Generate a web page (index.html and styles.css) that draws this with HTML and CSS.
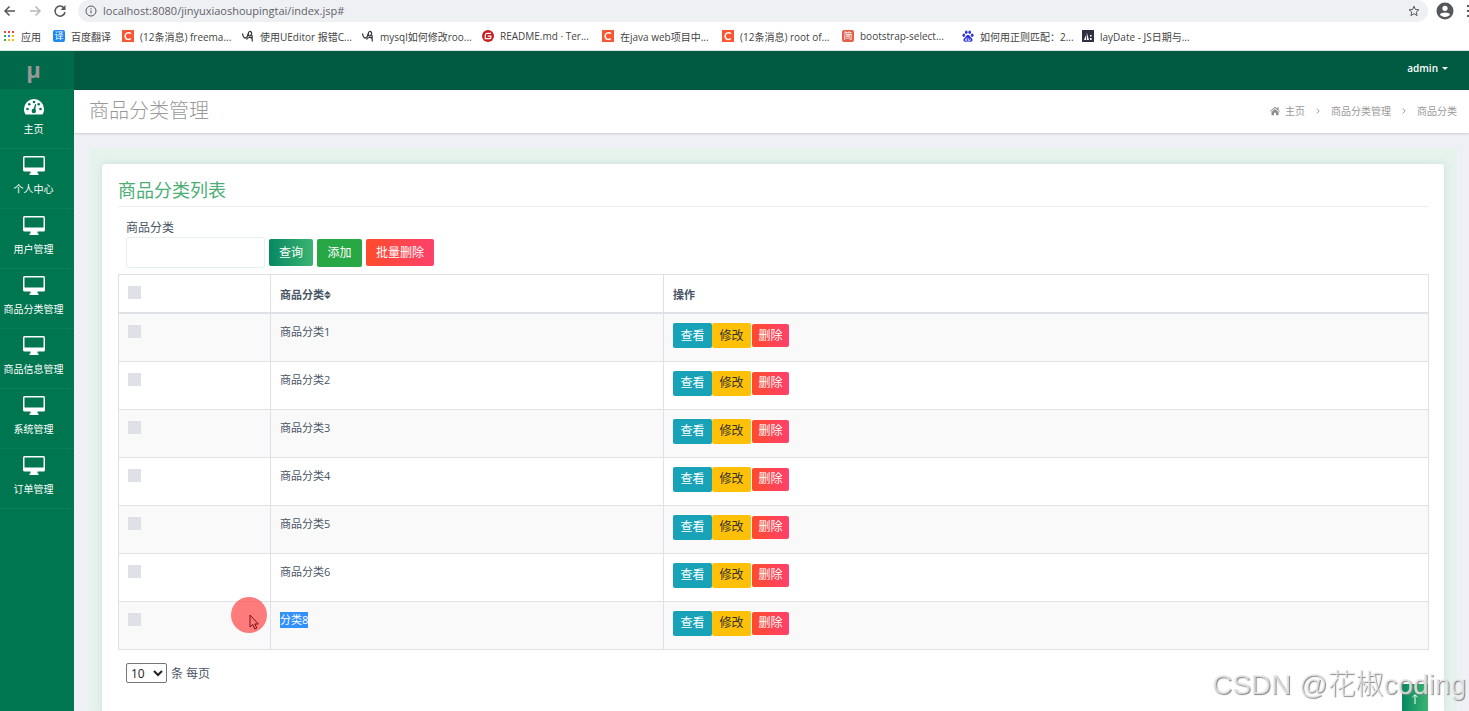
FILE: index.html
```
<!DOCTYPE html>
<html lang="zh-CN">
<head>
  <meta charset="UTF-8">
  <title>商品分类管理</title>
  <link rel="stylesheet" href="styles.css">
</head>
<body>
  <svg class="defs" width="0" height="0">
    <symbol id="monitor" viewBox="0 0 22 20">
      <path fill-rule="evenodd" d="M1.5 0h19A1.5 1.5 0 0 1 22 1.500V14a1.500 1.500 0 0 1-1.500 1.500H14.500V17.500H15.500V19H6.500V17.500H7.500V15.500H1.500A1.500 1.500 0 0 1 0 14V1.500A1.500 1.500 0 0 1 1.500 0ZM1.500 1.500V11.500H20.500V1.500Z"/>
    </symbol>
    <symbol id="gauge" viewBox="0 0 22 20">
      <path d="M11 3A10 10 0 0 0 1 13c0 2 .5 4 1.500 5.500h17C20.500 17 21 15 21 13A10 10 0 0 0 11 3Z"/>
      <g class="holes"><circle cx="4.500" cy="13" r="1.300"/><circle cx="6.300" cy="8.300" r="1.300"/><circle cx="11" cy="6" r="1.300"/><circle cx="15.700" cy="8.300" r="1.300"/><circle cx="17.500" cy="13" r="1.300"/><circle cx="10.800" cy="15" r="2.200"/><path d="M10 14.500 12.200 8l1 .3L12 15Z"/></g>
    </symbol>
    <symbol id="csdn" viewBox="0 0 12 12">
      <path fill="#fc5531" d="M0 0h12v12H0z"/>
      <path d="M9 3.700C7.500 2.300 3.300 2.100 3.200 6.200c0 3.700 3.800 3.900 5.500 2.500" fill="none" stroke="#fff" stroke-width="1.500"/>
    </symbol>
    <symbol id="scribble" viewBox="0 0 12 12">
      <path d="M.5 3.500C1 7 2.500 9 4.500 7.500S5.500 2 7.500 1.500 10.500 4 8.500 5.500 5.500 4 7 3.500M10 5l.3 6.500M4.500 9.500C6 7 8.500 7 10 8.500" fill="none" stroke="#333" stroke-width="1.200"/>
    </symbol>
  </svg>

  <div class="toolbar">
    <button class="tool" aria-label="后退"><svg width="14" height="14" viewBox="0 0 14 14"><path d="M12 7H2.500M6.500 2.500 2 7l4.500 4.500"/></svg></button>
    <button class="tool off" aria-label="前进"><svg width="14" height="14" viewBox="0 0 14 14"><path d="M2 7h9.500M7.500 2.500 12 7l-4.500 4.500"/></svg></button>
    <button class="tool" aria-label="刷新"><svg width="14" height="14" viewBox="0 0 14 14"><path d="M11 4A5 5 0 1 0 12 8"/><path class="solid" d="M12.500 1v5H7.500Z"/></svg></button>
    <div class="address">
      <svg width="12" height="12" viewBox="0 0 12 12"><circle cx="6" cy="6" r="5"/><path d="M6 5.300v3.200M6 3.200v1.200"/></svg>
      <label class="url"><input type="text" aria-label="地址" value="localhost:8080/jinyuxiaoshoupingtai/index.jsp#"></label>
      <svg width="12" height="12" viewBox="0 0 12 12"><path d="M6 1.200 7.400 4.500l3.500.3-2.700 2.300.9 3.500L6 8.700l-3.100 1.900.9-3.500L1.100 4.800l3.500-.3Z"/></svg>
    </div>
    <button class="tool profile" aria-label="用户"><svg width="18" height="18" viewBox="0 0 18 18"><circle class="solid" cx="9" cy="9" r="8.500"/><circle class="white" cx="9" cy="6.300" r="2.600"/><path class="white" d="M3.800 12.500C5 9.800 13 9.800 14.200 12.500 12 15.800 6 15.800 3.800 12.500Z"/></svg></button>
    <button class="tool more" aria-label="更多"><svg width="2" height="14" viewBox="0 0 2 14"><path class="solid" d="M0 1h2v2H0zM0 6h2v2H0zM0 11h2v2H0z"/></svg></button>
  </div>

  <nav class="bookmarks">
    <a class="apps" href="#"><svg width="12" height="12" viewBox="0 0 12 12"><path fill="#ea4335" d="M1 1h2v2H1zM5 1h2v2H5zM9 1h2v2H9z"/><path fill="#34a853" d="M1 5h2v2H1zM1 9h2v2H1z"/><path fill="#4285f4" d="M5 5h2v2H5z"/><path fill="#fbbc05" d="M9 5h2v2H9zM5 9h2v2H5zM9 9h2v2H9z"/></svg>应用</a>
    <a class="fanyi" href="#"><span class="badge blue">译</span>百度翻译</a>
    <a href="#"><svg width="12" height="12"><use href="#csdn"/></svg>(12条消息) freema...</a>
    <a href="#"><svg width="12" height="12"><use href="#scribble"/></svg>使用UEditor 报错C...</a>
    <a href="#"><svg width="12" height="12"><use href="#scribble"/></svg>mysql如何修改roo...</a>
    <a href="#"><svg width="12" height="12" viewBox="0 0 12 12"><circle cx="6" cy="6" r="6" fill="#c71d23"/><path d="M9 3.300H5.500C4 3.300 3.300 4 3.300 5.500v3.200h4.500q1 0 1-1V6.200H5.700" fill="none" stroke="#fff" stroke-width="1.300"/></svg>README.md · Ter...</a>
    <a href="#"><svg width="12" height="12"><use href="#csdn"/></svg>在java web项目中...</a>
    <a href="#"><svg width="12" height="12"><use href="#csdn"/></svg>(12条消息) root of...</a>
    <a href="#"><span class="badge red">简</span>bootstrap-select...</a>
    <a href="#"><svg width="12" height="12" viewBox="0 0 12 12"><g fill="#2932e1"><ellipse cx="1.800" cy="5.300" rx="1.300" ry="1.700"/><ellipse cx="4.300" cy="2.300" rx="1.300" ry="1.800"/><ellipse cx="7.700" cy="2.300" rx="1.300" ry="1.800"/><ellipse cx="10.200" cy="5.300" rx="1.300" ry="1.700"/><path d="M6 5C8 5 8 7 9.500 8s1.500 4-1 3.700q-2.500-.4-5 0C1 12 1 9 2.500 8S4 5 6 5Z"/></g><path d="M4.800 7.500v3H3.500V9h1M6.500 8.500v2h1.700v-2" fill="none" stroke="#fff" stroke-width=".7"/></svg>如何用正则匹配：2...</a>
    <a href="#"><svg width="12" height="12" viewBox="0 0 12 12"><path fill="#2f3040" d="M0 0h12v12H0z"/><path fill="#fff" d="M2 10 4 5v5zM4.800 10V2.500L7 10zM8 5h1.600v1.500H8zM8 8h1.600v2H8z"/></svg>layDate - JS日期与...</a>
  </nav>

  <div class="app">
    <aside class="sidebar">
      <a class="logo" href="#">µ</a>
      <a class="item" href="#"><svg width="22" height="20"><use href="#gauge"/></svg>主页</a>
      <a class="item" href="#"><svg width="22" height="20"><use href="#monitor"/></svg>个人中心</a>
      <a class="item" href="#"><svg width="22" height="20"><use href="#monitor"/></svg>用户管理</a>
      <a class="item" href="#"><svg width="22" height="20"><use href="#monitor"/></svg>商品分类管理</a>
      <a class="item" href="#"><svg width="22" height="20"><use href="#monitor"/></svg>商品信息管理</a>
      <a class="item" href="#"><svg width="22" height="20"><use href="#monitor"/></svg>系统管理</a>
      <a class="item" href="#"><svg width="22" height="20"><use href="#monitor"/></svg>订单管理</a>
    </aside>

    <div class="main">
      <header class="topbar"><button class="user">admin <span class="caret"></span></button></header>

      <div class="page-head">
        <h1>商品分类管理</h1>
        <nav class="crumbs">
          <a href="#"><svg width="10" height="10" viewBox="0 0 10 10"><path d="M5 .8 0 5.200l.6.6L5 2l4.400 3.800.6-.6L8.500 3.900V1.200H7.200v1.500ZM5 2.900 1.500 5.900v3.400H4V6.700h2v2.600h2.500V5.900Z"/></svg>主页</a>
          <svg class="sep" width="4" height="6" viewBox="0 0 4 6"><path d="m.7.500 2.500 2.500L.7 5.500"/></svg>
          <a href="#">商品分类管理</a>
          <svg class="sep" width="4" height="6" viewBox="0 0 4 6"><path d="m.7.500 2.500 2.500L.7 5.500"/></svg>
          <a href="#">商品分类</a>
        </nav>
      </div>

      <div class="content">
        <div class="wrap">
          <div class="card">
            <h2>商品分类列表</h2>
            <form class="search">
              <label for="keyword">商品分类</label>
              <div class="search-row">
                <input type="text" id="keyword">
                <button type="button" class="btn query">查询</button>
                <button type="button" class="btn add">添加</button>
                <button type="button" class="btn danger">批量删除</button>
              </div>
            </form>

            <table>
              <thead>
                <tr>
                  <th class="col-check"><input type="checkbox" aria-label="全选"></th>
                  <th class="col-name">商品分类<svg width="7" height="8" viewBox="0 0 7 8"><path d="M3.500 0 7 3.400H0ZM0 4.600h7L3.500 8Z"/></svg></th>
                  <th>操作</th>
                </tr>
              </thead>
              <tbody>
                <tr><td><input type="checkbox" aria-label="选择"></td><td>商品分类1</td><td><div class="ops"><button class="btn view">查看</button><button class="btn edit">修改</button><button class="btn danger">删除</button></div></td></tr>
                <tr><td><input type="checkbox" aria-label="选择"></td><td>商品分类2</td><td><div class="ops"><button class="btn view">查看</button><button class="btn edit">修改</button><button class="btn danger">删除</button></div></td></tr>
                <tr><td><input type="checkbox" aria-label="选择"></td><td>商品分类3</td><td><div class="ops"><button class="btn view">查看</button><button class="btn edit">修改</button><button class="btn danger">删除</button></div></td></tr>
                <tr><td><input type="checkbox" aria-label="选择"></td><td>商品分类4</td><td><div class="ops"><button class="btn view">查看</button><button class="btn edit">修改</button><button class="btn danger">删除</button></div></td></tr>
                <tr><td><input type="checkbox" aria-label="选择"></td><td>商品分类5</td><td><div class="ops"><button class="btn view">查看</button><button class="btn edit">修改</button><button class="btn danger">删除</button></div></td></tr>
                <tr><td><input type="checkbox" aria-label="选择"></td><td>商品分类6</td><td><div class="ops"><button class="btn view">查看</button><button class="btn edit">修改</button><button class="btn danger">删除</button></div></td></tr>
                <tr><td><input type="checkbox" aria-label="选择"></td><td><span class="selected">分类8</span></td><td><div class="ops"><button class="btn view">查看</button><button class="btn edit">修改</button><button class="btn danger">删除</button></div></td></tr>
              </tbody>
            </table>

            <div class="pager">
              <select id="size"><option>10</option><option>20</option></select>
              <label for="size">条 每页</label>
            </div>
          </div>
        </div>
      </div>
    </div>
  </div>

  <a class="to-top" href="#" aria-label="返回顶部"><svg width="8" height="10" viewBox="0 0 8 10"><path d="M4 10V1M1.500 3 4 .8 6.500 3"/></svg></a>
  <div class="watermark">CSDN @花椒coding</div>
  <div class="pointer"><svg width="10" height="16" viewBox="0 0 10 16"><path d="M1 1v12l2.800-2.500L5.800 15l2-1-2-4H9.300Z"/></svg></div>
</body>
</html>
```
FILE: styles.css
```
* {
  box-sizing: border-box;
}

body {
  margin: 0;
  min-height: 100vh;
  display: flex;
  flex-direction: column;
  font-family: "Open Sans", "Noto Sans CJK SC", sans-serif;
  font-size: 12px;
  color: #495565;
  background: #eff0f5;
}

a {
  color: inherit;
  text-decoration: none;
}

button, input, select {
  font-family: inherit;
}

button {
  cursor: pointer;
}

.defs {
  position: absolute;
}

/* browser bar */
.toolbar {
  display: flex;
  align-items: center;
  height: 22px;
  padding-left: 3px;
  background: #fff;
  flex-shrink: 0;
}

.tool {
  display: flex;
  border: none;
  background: none;
  padding: 0;
  margin-right: 11px;
}

.toolbar svg {
  fill: none;
  stroke: #54585c;
  stroke-width: 1.5;
}

.toolbar .off svg {
  stroke: #b5b8bb;
}

.toolbar .solid {
  fill: #54585c;
  stroke: none;
}

.toolbar .white {
  fill: #fff;
  stroke: none;
}

.address {
  flex: 1;
  display: flex;
  align-items: center;
  gap: 6px;
  height: 22px;
  padding: 0 8px 0 7px;
  border-radius: 11px;
  background: #eff0f4;
}

.address svg {
  stroke-width: 1;
}

.url {
  flex: 1;
  display: flex;
}

.url input {
  width: 100%;
  border: none;
  padding: 0;
  background: none;
  font-size: 11px;
  line-height: 16px;
  color: #5f6368;
}

.tool.profile {
  margin: 0 13px 0 8px;
}

.tool.more {
  margin: 0;
}

.bookmarks {
  display: flex;
  align-items: center;
  height: 29px;
  padding-left: 3px;
  border-bottom: 1px solid #d5e5df;
  background: #fff;
  flex-shrink: 0;
}

.bookmarks a {
  display: flex;
  align-items: center;
  gap: 6px;
  width: 120px;
  font-size: 10px;
  white-space: nowrap;
  color: #444;
}

.bookmarks .apps {
  width: 50px;
}

.bookmarks .fanyi {
  width: 69px;
}

.badge {
  width: 12px;
  height: 12px;
  border-radius: 2px;
  font-size: 9px;
  line-height: 12px;
  text-align: center;
  color: #fff;
}

.blue {
  background: #1e88f0;
}

.red {
  background: #e2604a;
}

/* layout */
.app {
  flex: 1;
  display: flex;
}

.sidebar {
  width: 74px;
  flex-shrink: 0;
  background: #007650;
}

.logo {
  display: block;
  height: 38px;
  padding-right: 7px;
  background: #00694a;
  color: #999;
  font-size: 22px;
  font-weight: bold;
  line-height: 36px;
  text-align: center;
}

.item {
  display: flex;
  flex-direction: column;
  align-items: center;
  gap: 5px;
  height: 60px;
  padding: 7px 7px 0 0;
  border-bottom: 1px solid #0a7e59;
  color: #fff;
  font-size: 10px;
  line-height: 16px;
  white-space: nowrap;
}

.item svg {
  fill: #fff;
}

.holes {
  fill: #007650;
}

.main {
  flex: 1;
  display: flex;
  flex-direction: column;
  min-width: 0;
}

.topbar {
  display: flex;
  justify-content: flex-end;
  align-items: flex-start;
  height: 39px;
  padding: 9px 21px 0 0;
  background: #005a41;
  flex-shrink: 0;
}

.user {
  display: flex;
  align-items: center;
  gap: 4px;
  border: none;
  padding: 0;
  background: none;
  color: #fff;
  font-size: 10px;
  font-weight: 600;
  line-height: 16px;
}

.caret {
  border: 3px solid transparent;
  border-top-color: #fff;
  border-bottom: 0;
}

.page-head {
  display: flex;
  justify-content: space-between;
  align-items: center;
  height: 43px;
  padding: 0 12px 2px 15px;
  background: #fff;
  box-shadow: 0 1px 2px rgba(0, 0, 0, 0.15);
  flex-shrink: 0;
}

h1 {
  margin: 0;
  color: #999;
  font-size: 20px;
  font-weight: 300;
  line-height: 28px;
}

.crumbs {
  display: flex;
  align-items: center;
  gap: 11px;
  color: #999;
  font-size: 10px;
}

.crumbs a {
  display: flex;
  align-items: center;
  gap: 5px;
}

.crumbs svg {
  fill: #8c8c8c;
}

.crumbs .sep {
  fill: none;
  stroke: #999;
}

.content {
  flex: 1;
  display: flex;
  padding: 15px 12px 0 16px;
}

.wrap {
  flex: 1;
  display: flex;
  padding: 16px 13px 0 12px;
  background: #e6f2ec;
}

.card {
  flex: 1;
  padding: 13px 15px 0 16px;
  border-radius: 3px 3px 0 0;
  background: #fff;
  box-shadow: 0 0 6px rgba(120, 170, 190, 0.25);
}

h2 {
  margin: 0;
  padding-bottom: 3px;
  border-bottom: 1px solid #eee;
  color: #4bae76;
  font-size: 18px;
  font-weight: 400;
  line-height: 26px;
}

.search {
  padding: 12px 8px 6px;
}

.search label {
  display: block;
  line-height: 18px;
}

.search-row {
  display: flex;
  align-items: center;
  gap: 4px;
}

.search-row input {
  width: 139px;
  height: 31px;
  border: 1px solid #e4f1ec;
  border-radius: 3px;
}

.btn {
  height: 27px;
  border: none;
  border-radius: 2px;
  padding: 0 10px;
  color: #fff;
  font-size: 12px;
  line-height: 18px;
}

.query {
  background: linear-gradient(to right, #068862, #3cb371);
}

.add {
  width: 45px;
  height: 28px;
  background: #28a745;
}

.danger {
  background: linear-gradient(to right, #ff4b2b, #ff416c);
}

table {
  width: 100%;
  table-layout: fixed;
  border-collapse: collapse;
  font-size: 11px;
}

th, td {
  border: 1px solid #dee2e6;
  padding: 9px;
  text-align: left;
  vertical-align: top;
  line-height: 18px;
}

th {
  height: 38px;
  padding: 11px 9px 8px;
  border-bottom-width: 2px;
  font-weight: 700;
}

th svg {
  fill: #495565;
}

td {
  height: 48px;
}

.col-check {
  width: 152px;
}

.col-name {
  width: 30%;
}

tbody tr:nth-child(odd) {
  background: #f9f9f9;
}

input[type="checkbox"] {
  appearance: none;
  display: block;
  width: 13px;
  height: 13px;
  margin: 2px 0;
  background: #dee2e6;
}

th input[type="checkbox"] {
  margin: 0;
}

.ops {
  display: flex;
  align-items: center;
}

.ops .btn {
  width: 39px;
  height: 25px;
  padding: 0;
}

.ops .danger {
  width: 37px;
  height: 23px;
  margin-left: 1px;
}

.view {
  background: #17a2b8;
}

.ops .edit {
  background: #ffc107;
  color: #333;
}

.selected {
  display: inline-block;
  background: #3390ff;
  color: #fff;
  line-height: 16px;
}

.pager {
  display: flex;
  align-items: center;
  gap: 4px;
  padding: 13px 8px 0;
}

.pager select {
  width: 41px;
  height: 20px;
  border: 1px solid #767676;
  border-radius: 2px;
  padding: 0;
  background: #fff;
  color: #222;
  font-size: 12px;
}

/* overlays */
.to-top {
  position: fixed;
  right: 41px;
  bottom: 0;
  display: flex;
  justify-content: center;
  width: 26px;
  height: 27px;
  padding-top: 10px;
  background: linear-gradient(to right, #068862, #3cb371);
}

.to-top svg {
  fill: none;
  stroke: #fff;
}

.watermark {
  position: fixed;
  right: 3px;
  bottom: 6px;
  color: rgba(235, 235, 235, 0.8);
  font-family: "Liberation Sans", "Noto Sans CJK SC", sans-serif;
  font-size: 28px;
  font-weight: 300;
  line-height: 40px;
  white-space: nowrap;
  text-shadow: 1px 1px 1px #888;
}

.pointer {
  position: absolute;
  left: 231px;
  top: 597px;
  display: flex;
  width: 36px;
  height: 36px;
  padding: 17px 0 0 18px;
  border-radius: 50%;
  background: rgba(255, 80, 80, 0.75);
  pointer-events: none;
}

.pointer svg {
  fill: none;
  stroke: #7a0f14;
}
```
